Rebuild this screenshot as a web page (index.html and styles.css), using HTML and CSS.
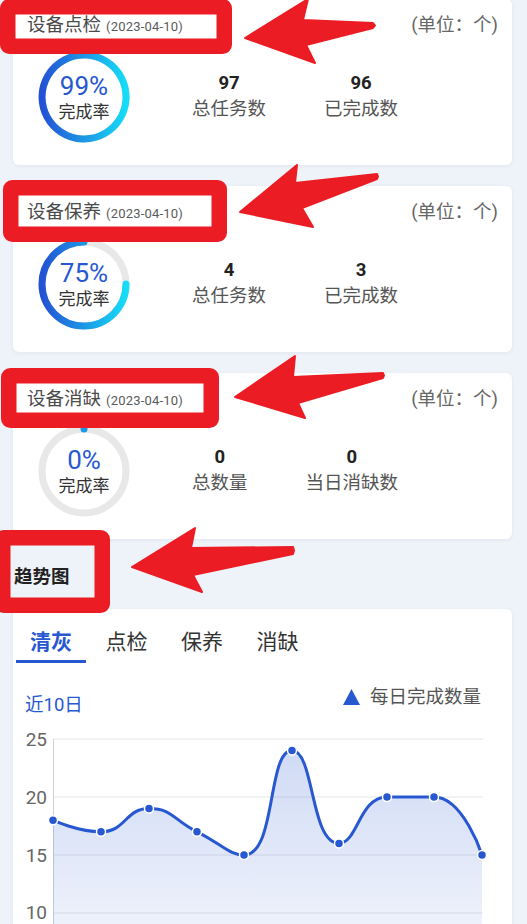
FILE: index.html
```html
<!DOCTYPE html>
<html lang="zh-CN">
<head>
<meta charset="utf-8">
<title>设备统计</title>
<link rel="stylesheet" href="styles.css">
</head>
<body>
<div class="page">
  <section class="card stat-card first">
    <div class="card-head">
      <div class="title">设备点检<span class="date">(2023-04-10)</span></div>
      <div class="unit">(单位：个)</div>
    </div>
    <div class="card-body">
      <div class="ring">
        <svg class="ring-svg" viewBox="0 0 92 92" width="92" height="92">
          <defs>
            <linearGradient id="rg1" gradientUnits="userSpaceOnUse" x1="4" y1="0" x2="88" y2="0">
              <stop offset="0" stop-color="#2352d4"/>
              <stop offset="1" stop-color="#16dcf7"/>
            </linearGradient>
          </defs>
          <circle cx="46" cy="46" r="42" fill="none" stroke="#e8e8e8" stroke-width="7"/>
          <path d="M46 4 A42 42 0 1 0 48.64 4.08" fill="none" stroke="url(#rg1)" stroke-width="7" stroke-linecap="round"/>
        </svg>
        <div class="ring-text"><div class="pct">99%</div><div class="pct-label">完成率</div></div>
      </div>
      <div class="stats">
        <div class="stat"><div class="num">97</div><div class="label">总任务数</div></div>
        <div class="stat"><div class="num">96</div><div class="label">已完成数</div></div>
      </div>
    </div>
  </section>

  <section class="card stat-card">
    <div class="card-head">
      <div class="title">设备保养<span class="date">(2023-04-10)</span></div>
      <div class="unit">(单位：个)</div>
    </div>
    <div class="card-body">
      <div class="ring">
        <svg class="ring-svg" viewBox="0 0 92 92" width="92" height="92">
          <defs>
            <linearGradient id="rg2" gradientUnits="userSpaceOnUse" x1="4" y1="0" x2="88" y2="0">
              <stop offset="0" stop-color="#2352d4"/>
              <stop offset="1" stop-color="#16dcf7"/>
            </linearGradient>
          </defs>
          <circle cx="46" cy="46" r="42" fill="none" stroke="#e8e8e8" stroke-width="7"/>
          <path d="M46 4 A42 42 0 1 0 88 46" fill="none" stroke="url(#rg2)" stroke-width="7" stroke-linecap="round"/>
        </svg>
        <div class="ring-text"><div class="pct">75%</div><div class="pct-label">完成率</div></div>
      </div>
      <div class="stats">
        <div class="stat"><div class="num">4</div><div class="label">总任务数</div></div>
        <div class="stat"><div class="num">3</div><div class="label">已完成数</div></div>
      </div>
    </div>
  </section>

  <section class="card stat-card">
    <div class="card-head">
      <div class="title">设备消缺<span class="date">(2023-04-10)</span></div>
      <div class="unit">(单位：个)</div>
    </div>
    <div class="card-body">
      <div class="ring">
        <svg class="ring-svg" viewBox="0 0 92 92" width="92" height="92">
          <circle cx="46" cy="46" r="42" fill="none" stroke="#e8e8e8" stroke-width="7"/>
          <path d="M46 4 L46.05 4" fill="none" stroke="#1d98e6" stroke-width="7" stroke-linecap="round"/>
        </svg>
        <div class="ring-text"><div class="pct">0%</div><div class="pct-label">完成率</div></div>
      </div>
      <div class="stats">
        <div class="stat"><div class="num">0</div><div class="label">总数量</div></div>
        <div class="stat"><div class="num">0</div><div class="label">当日消缺数</div></div>
      </div>
    </div>
  </section>

  <h2 class="trend-title">趋势图</h2>

  <section class="card chart-card">
    <div class="tabs">
      <div class="tab active">清灰</div>
      <div class="tab">点检</div>
      <div class="tab">保养</div>
      <div class="tab">消缺</div>
    </div>
    <div class="chart-head">
      <div class="range">近10日</div>
      <div class="legend">
        <svg class="legend-icon" viewBox="0 0 17 16" width="17" height="16"><polygon points="8.5,0 17,16 0,16" fill="#2858d0"/></svg>
        <span class="legend-text">每日完成数量</span>
      </div>
    </div>
    <svg class="plot" viewBox="13 720 499 250" width="499" height="250">
      <defs>
        <linearGradient id="area" gradientUnits="userSpaceOnUse" x1="0" y1="750" x2="0" y2="1030">
          <stop offset="0" stop-color="#2858d0" stop-opacity="0.22"/>
          <stop offset="1" stop-color="#2858d0" stop-opacity="0"/>
        </linearGradient>
      </defs>
      <g class="grid">
        <line x1="53" y1="740" x2="483" y2="740"/>
        <line x1="53" y1="798" x2="483" y2="798"/>
        <line x1="53" y1="856" x2="483" y2="856"/>
        <line x1="53" y1="914" x2="483" y2="914"/>
      </g>
      <line class="axis" x1="53.5" y1="740" x2="53.5" y2="970"/>
      <g class="ylabels">
        <text x="47" y="747">25</text>
        <text x="47" y="805">20</text>
        <text x="47" y="863">15</text>
        <text x="47" y="920">10</text>
      </g>
      <path class="area" d="M53,821.2 C53,821.2 77.9,832.8 101,832.8 C125.9,832.8 125,809.6 149,809.6 C173,809.6 173.05,821.1 197,832.8 C220.55,844.3 229.1,856 244,856 C276.6,856 267.07,751.6 292,751.6 C314.56,751.6 310.07,844.4 339,844.4 C357.57,844.4 359.2,798 387,798 C406.6,798 415.74,798 434,798 C463.26,798 482,856 482,856 L482,970 L53,970 Z"/>
      <path class="line" d="M53,821.2 C53,821.2 77.9,832.8 101,832.8 C125.9,832.8 125,809.6 149,809.6 C173,809.6 173.05,821.1 197,832.8 C220.55,844.3 229.1,856 244,856 C276.6,856 267.07,751.6 292,751.6 C314.56,751.6 310.07,844.4 339,844.4 C357.57,844.4 359.2,798 387,798 C406.6,798 415.74,798 434,798 C463.26,798 482,856 482,856"/>
      <g class="dots">
        <circle cx="53" cy="821.2" r="4.5"/>
        <circle cx="101" cy="832.8" r="4.5"/>
        <circle cx="149" cy="809.6" r="4.5"/>
        <circle cx="197" cy="832.8" r="4.5"/>
        <circle cx="244" cy="856" r="4.5"/>
        <circle cx="292" cy="751.6" r="4.5"/>
        <circle cx="339" cy="844.4" r="4.5"/>
        <circle cx="387" cy="798" r="4.5"/>
        <circle cx="434" cy="798" r="4.5"/>
        <circle cx="482" cy="856" r="4.5"/>
      </g>
    </svg>
  </section>
</div>

<svg class="annot" viewBox="0 0 527 924" width="527" height="924">
  <g class="boxes">
    <rect x="7.75" y="6.75" width="216.5" height="39.5" rx="1.5"/>
    <rect x="10.75" y="187.75" width="208.5" height="46.5" rx="1.5"/>
    <rect x="8.75" y="375.75" width="202.5" height="44.5" rx="1.5"/>
    <rect x="2.75" y="537.75" width="99.5" height="67.5" rx="1.5"/>
  </g>
  <g class="arrows">
    <polygon points="245,38 308,-1 303,20 373,23 375,25.5 373,28 306,45 315,63"/>
    <polygon points="240,212 297,165 295,183 377,174 378,176.5 377,179 302,208 313,227"/>
    <polygon points="235,397 295,356 293,377 383,373 384,375.5 383,378 298,403 305,418"/>
    <polygon points="132,567 195,528 191,548 293,547 294,550.5 293,554 193,575 202,592"/>
  </g>
</svg>
</body>
</html>
```

FILE: styles.css
```css
* {
  box-sizing: border-box;
}

html, body {
  margin: 0;
  padding: 0;
}

body {
  position: relative;
  width: 527px;
  height: 924px;
  overflow: hidden;
  background: #eef2f9;
  font-family: Roboto, "Noto Sans CJK SC", sans-serif;
  color: #333;
}

.page {
  padding: 0 15px 0 13px;
}

.card {
  background: #fff;
  border-radius: 6px;
  box-shadow: 0 1px 4px rgba(40, 60, 110, 0.06);
}

.stat-card {
  height: 166px;
  padding: 12px 14px 22px 14px;
  margin-top: 21px;
}

.stat-card.first {
  margin-top: -1px;
}

.card-head {
  display: flex;
  justify-content: space-between;
  align-items: baseline;
  height: 28px;
  line-height: 28px;
}

.title {
  font-size: 18.5px;
  color: #4a4a4a;
}

.date {
  font-size: 13px;
  letter-spacing: 0.2px;
  color: #5a5a5a;
  margin-left: 5px;
}

.unit {
  font-size: 18.5px;
  color: #666;
}

.card-body {
  display: flex;
  align-items: center;
  margin-top: 12px;
}

.ring {
  display: grid;
  width: 92px;
  height: 92px;
  margin-left: 11px;
  place-items: center;
}

.ring-svg,
.ring-text {
  grid-area: 1 / 1;
}

.ring-text {
  text-align: center;
  padding-top: 2px;
}

.pct {
  font-size: 26px;
  line-height: 28px;
  color: #2858d0;
}

.pct-label {
  font-size: 17px;
  line-height: 24px;
  color: #333;
}

.stats {
  display: flex;
  justify-content: space-between;
  width: 206px;
  margin-left: 62px;
}

.stat {
  text-align: center;
}

.num {
  font-size: 18.5px;
  font-weight: 700;
  line-height: 24px;
  color: #222;
}

.label {
  font-size: 18.5px;
  line-height: 28px;
  color: #555;
}

.trend-title {
  margin: 25px 0 19px 1px;
  font-size: 18.5px;
  line-height: 26px;
  font-weight: 700;
  color: #222;
}

.chart-card {
  height: 380px;
  width: 499px;
}

.tabs {
  display: flex;
  padding: 15px 0 0 3px;
}

.tab {
  width: 70px;
  height: 39px;
  margin-right: 5.5px;
  font-size: 21px;
  line-height: 36px;
  text-align: center;
  color: #333;
}

.tab.active {
  color: #2858d0;
  font-weight: 700;
  border-bottom: 3px solid #2858d0;
}

.chart-head {
  display: flex;
  justify-content: space-between;
  align-items: flex-start;
  height: 56px;
  padding: 0 31px 0 12px;
}

.range {
  margin-top: 30px;
  font-size: 18.5px;
  line-height: 24px;
  color: #2858d0;
}

.legend {
  display: flex;
  align-items: center;
  margin-top: 22px;
  height: 24px;
}

.legend-icon {
  display: block;
}

.legend-text {
  margin-left: 10px;
  font-size: 18.5px;
  line-height: 24px;
  color: #555;
}

.plot {
  display: block;
}

.grid line {
  stroke: #e4e6ea;
  stroke-width: 1;
}

.axis {
  stroke: #cfd2d8;
  stroke-width: 1;
}

.ylabels text {
  font-family: Roboto, "Noto Sans", sans-serif;
  font-size: 19px;
  fill: #666;
  text-anchor: end;
}

.area {
  fill: url(#area);
}

.line {
  fill: none;
  stroke: #2858d0;
  stroke-width: 3;
}

.dots circle {
  fill: #2858d0;
  stroke: #fff;
  stroke-width: 1.5;
}

.annot {
  position: absolute;
  top: 0;
  left: 0;
  pointer-events: none;
}

.boxes rect {
  fill: none;
  stroke: #ec1c24;
  stroke-width: 15.5;
}

.arrows polygon {
  fill: #ec1c24;
  stroke: #ec1c24;
  stroke-width: 2;
  stroke-linejoin: round;
}
```
